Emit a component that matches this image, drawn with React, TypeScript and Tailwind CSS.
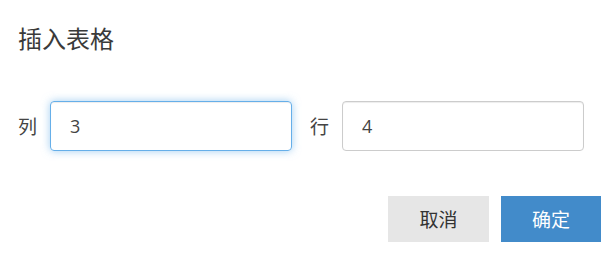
import React from 'react';

const font = { fontFamily: '"Noto Sans CJK SC", "Noto Sans", sans-serif' };

export default function App() {
  return (
    <div className="w-[605px] h-[256px] bg-white text-[#333] font-['Noto_Sans_CJK_SC',sans-serif] overflow-hidden">
      <h1 className="pl-[18px] pt-[22px] text-[24px] leading-[32px] font-normal text-[#3a3a3a]">插入表格</h1>
      <div className="flex items-center mt-[47px] pl-[18px]">
        <span className="text-[19px] w-[32px] text-[#444]">列</span>
        <input
          defaultValue="3"
          className="w-[242px] h-[50px] px-[19px] text-[18px] text-[#444] rounded-[4px] border border-[#66afe9] outline-none shadow-[inset_0_1px_1px_rgba(0,0,0,0.075),0_0_8px_rgba(102,175,233,0.6)] font-['Open_Sans',sans-serif]"
        />
        <span className="text-[19px] ml-[18px] w-[32px] text-[#444]">行</span>
        <input
          defaultValue="4"
          className="w-[242px] h-[50px] px-[19px] text-[18px] text-[#444] rounded-[4px] border border-[#ccc] outline-none shadow-[inset_0_1px_1px_rgba(0,0,0,0.075)] font-['Open_Sans',sans-serif]"
        />
      </div>
      <div className="flex justify-end gap-[12px] mt-[45px] pr-[4px]">
        <button className="w-[101px] h-[46px] bg-[#e6e6e6] text-[#333] text-[19px]" style={font}>取消</button>
        <button className="w-[100px] h-[46px] bg-[#428bca] text-white text-[19px]" style={font}>确定</button>
      </div>
    </div>
  );
}
